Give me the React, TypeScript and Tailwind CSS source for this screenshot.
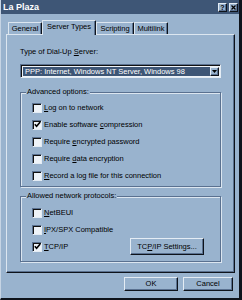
import React from "react";

const U = ({ c }: { c: string }) => (
  <span className="underline decoration-1 underline-offset-[1px]">{c}</span>
);

function Check({ checked }: { checked?: boolean }) {
  return (
    <div className="w-[10px] h-[10px] shrink-0 bg-[#eef3f8] border border-t-[#5a7190] border-l-[#5a7190] border-b-[#e4ecf4] border-r-[#e4ecf4] shadow-[inset_1px_1px_0_#111] flex items-center justify-center">
      {checked && (
        <svg width="7" height="7" viewBox="0 0 7 7">
          <path d="M0.8 3.2 L2.6 5.2 L6.2 1" stroke="#000" strokeWidth="1.6" fill="none" />
        </svg>
      )}
    </div>
  );
}

function Row({ checked, children }: { checked?: boolean; children: React.ReactNode }) {
  return (
    <div className="h-[17px] flex items-center pl-[11px] gap-[2px]">
      <Check checked={checked} />
      <span className="leading-[10px]">{children}</span>
    </div>
  );
}

const btn3d =
  "border border-t-[#e4ecf4] border-l-[#e4ecf4] border-r-[#0e131b] border-b-[#0e131b] shadow-[inset_-1px_-1px_0_#5a7190] bg-[#99b3ce] flex items-center justify-center";

function Group({ label, className, children }: { label: string; className: string; children: React.ReactNode }) {
  return (
    <div className={"relative border border-[#5a7190] shadow-[inset_1px_1px_0_#dce6f0,1px_1px_0_#dce6f0] " + className}>
      <span className="absolute -top-[6px] left-[5px] px-[1px] bg-[#99b3ce] leading-[10px]">{label}</span>
      {children}
    </div>
  );
}

function Tab({ label, w, selected }: { label: string; w: string; selected?: boolean }) {
  return (
    <div
      className={
        "flex items-center justify-center border-l border-t border-r border-l-[#dce6f0] border-t-[#dce6f0] border-r-[#0e131b] shadow-[inset_-1px_0_0_#5a7190] bg-[#99b3ce] rounded-t-[1px] " +
        w +
        (selected ? " h-[15px] -mb-px relative z-10 pb-[2px]" : " h-[12px]")
      }
    >
      <span className="leading-[10px]">{label}</span>
    </div>
  );
}

export default function App() {
  return (
    <div
      className="w-[242px] h-[300px] bg-[#99b3ce] text-[7.5px] text-black overflow-hidden border-l border-l-[#c6d4e4] border-r-[3px] border-r-[#0e131b] border-b-[2px] border-b-[#0e131b]"
      style={{ fontFamily: '"Liberation Sans", Arial, sans-serif' }}
    >
      {/* Title bar */}
      <div className="h-[14px] bg-[#3e5676] flex items-center justify-between pl-[2px] pr-[1px]">
        <span className="text-white font-bold text-[9px] leading-[10px]">La Plaza</span>
        <div className="flex gap-[1px]">
          <div className={"w-[9px] h-[9px] " + btn3d}>
            <span className="font-bold text-[7px] leading-[7px]">?</span>
          </div>
          <div className={"w-[9px] h-[9px] ml-[1px] " + btn3d}>
            <svg width="5" height="5" viewBox="0 0 5 5">
              <path d="M0.5 0.5 L4.5 4.5 M4.5 0.5 L0.5 4.5" stroke="#000" strokeWidth="1.3" />
            </svg>
          </div>
        </div>
      </div>

      {/* Tabs */}
      <div className="h-[20px] flex items-end pl-[7px]">
        <Tab label="General" w="w-[34px]" />
        <Tab label="Server Types" w="w-[54px]" selected />
        <Tab label="Scripting" w="w-[38px]" />
        <Tab label="Multilink" w="w-[34px]" />
      </div>

      {/* Panel */}
      <div className="ml-[5px] w-[229px] h-[239px] border border-t-[#dce6f0] border-l-[#dce6f0] border-r-[#0e131b] border-b-[#0e131b] shadow-[inset_-1px_-1px_0_#5a7190] pl-[13px] pt-[12px]">
        <div className="leading-[10px]">
          Type of Dial-Up <U c="S" />erver:
        </div>
        <div className="mt-[7px] w-[201px] h-[14px] border border-t-[#5a7190] border-l-[#5a7190] border-b-[#e4ecf4] border-r-[#e4ecf4] shadow-[inset_1px_1px_0_#111] bg-[#eef3f8] flex items-stretch p-[1px] pl-[2px]">
          <div className="flex-1 bg-[#3e5676] text-white flex items-center pl-[2px] mt-[1px] mb-[0px]">
            <span className="leading-[10px]">PPP: Internet, Windows NT Server, Windows 98</span>
          </div>
          <div className={"w-[9px] mt-[1px] " + btn3d}>
            <svg width="5" height="3" viewBox="0 0 5 3">
              <path d="M0 0 H5 L2.5 3 Z" fill="#000" />
            </svg>
          </div>
        </div>

        <Group label="Advanced options:" className="mt-[14px] w-[201px] h-[95px] pt-[6px]">
          <Row>
            <U c="L" />og on to network
          </Row>
          <Row checked>
            Enable software <U c="c" />ompression
          </Row>
          <Row>
            Require <U c="e" />ncrypted password
          </Row>
          <Row>
            Require <U c="d" />ata encryption
          </Row>
          <Row>
            <U c="R" />ecord a log file for this connection
          </Row>
        </Group>

        <Group label="Allowed network protocols:" className="mt-[9px] w-[201px] h-[66px] pt-[7px]">
          <Row>
            <U c="N" />etBEUI
          </Row>
          <Row>
            <U c="I" />PX/SPX Compatible
          </Row>
          <div className="h-[17px] flex items-center">
            <Row checked>
              <U c="T" />CP/IP
            </Row>
            <div className={"ml-auto mr-[16px] w-[74px] h-[17px] " + btn3d}>
              <span className="leading-[10px]">
                TC<U c="P" />/IP Settings...
              </span>
            </div>
          </div>
        </Group>
      </div>

      {/* Buttons */}
      <div className="mt-[4px] flex justify-end gap-[5px] pr-[6px]">
        <div className={"w-[54px] h-[14px] " + btn3d}>
          <span className="leading-[10px]">OK</span>
        </div>
        <div className={"w-[50px] h-[14px] " + btn3d}>
          <span className="leading-[10px]">Cancel</span>
        </div>
      </div>
    </div>
  );
}
